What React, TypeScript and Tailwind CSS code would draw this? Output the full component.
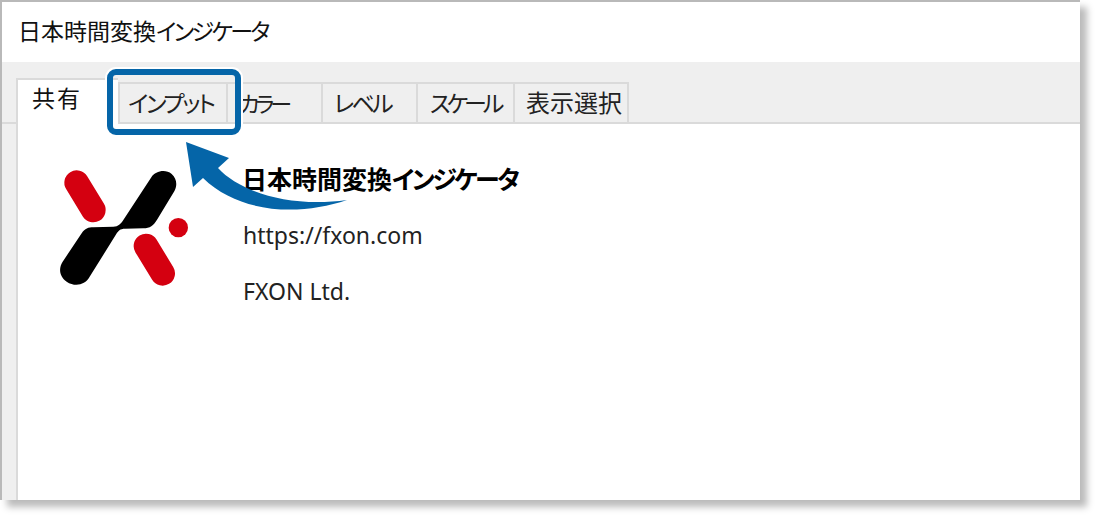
const jp = "font-['Noto_Sans_CJK_JP','Noto_Sans',sans-serif] [font-feature-settings:'palt']";

const tabs = [
  { label: "インプット", w: "w-[108px] pl-[8px]", c: "text-[23px] tracking-[-2.3px]" },
  { label: "カラー", w: "w-[95px] pl-[11px]", c: "text-[22px] tracking-[-4px]" },
  { label: "レベル", w: "w-[95px] pl-[11px]", c: "text-[23px] tracking-[-2.8px]" },
  { label: "スケール", w: "w-[97px] pl-[12px]", c: "text-[23px] tracking-[-4px]" },
  { label: "表示選択", w: "w-[116px] pl-[11px]", c: "text-[24px]" },
];

function Logo() {
  return (
    <svg width="150" height="135" viewBox="0 0 450 405" className="shrink-0">
      <path d="M80 68 L130 150" stroke="#d40010" strokeWidth="74" strokeLinecap="round" />
      <path d="M288 258 L338 340" stroke="#d40010" strokeWidth="74" strokeLinecap="round" />
      <circle cx="385" cy="203" r="29" fill="#d40010" />
      <path
        d="M305 50 C315 35 345 25 365 42 C382 58 382 78 372 95 L322 178 C310 198 300 205 280 205 L225 206 C210 206 205 212 197 225 L118 352 C105 375 75 382 50 365 C28 350 25 325 38 305 L95 220 C105 205 115 202 130 202 L190 200 C205 200 212 192 220 180 Z"
        fill="#000"
      />
    </svg>
  );
}

export default function App() {
  return (
    <div className={`relative h-[520px] w-[1100px] overflow-hidden bg-white ${jp}`}>
      <div className="flex h-[500px] w-[1080px] flex-col border-l-2 border-t-2 border-[#b9b9b9] bg-white text-[#111] shadow-[7px_7px_7px_rgba(0,0,0,0.27)]">
        <div className="flex h-[60px] items-center pb-[4px] pl-[16px] text-[23px]">
          日本時間変換<span className="tracking-[-2.6px]">インジケータ</span>
        </div>

        <div className="flex h-[62px] items-end border-b-2 border-[#dadada] bg-[#efefef] pl-[14px]">
          <div className="relative top-[2px] flex h-[46px] w-[102px] border-l-2 border-t-2 border-[#dadada] bg-white pl-[14px] text-[23px] leading-[34px] tracking-[2px]">
            共有
          </div>
          <div className="flex">
            {tabs.map((t) => (
              <div
                key={t.label}
                className={`flex h-[40px] items-center border-l-2 border-t-2 border-[#dadada] pb-[2px] text-[#222] last:border-r-2 ${t.w} ${t.c}`}
              >
                {t.label}
              </div>
            ))}
          </div>
        </div>

        <div className="flex flex-1 bg-[#efefef]">
          <div className="ml-[14px] flex flex-1 items-start border-l-2 border-[#dadada] bg-white pl-[32px] pt-[36px]">
            <Logo />
            <div className="ml-[43px] flex flex-col">
              <div className="-ml-[1px] mt-[-1px] h-[38px] text-[25px] font-bold leading-[38px] text-black">
                日本時間変換<span className="tracking-[-2.5px]">インジケータ</span>
              </div>
              <div className="mt-[24px] font-['Noto_Sans',sans-serif] text-[23px] leading-[28px] text-[#222]">https://fxon.com</div>
              <div className="mt-[28px] font-['Noto_Sans',sans-serif] text-[23px] leading-[28px] text-[#222]">FXON Ltd.</div>
            </div>
          </div>
        </div>
      </div>

      <div className="absolute left-[107px] top-[69px] h-[66px] w-[134px] rounded-[9px] border-[6px] border-[#0565a8] shadow-[0_0_0_2px_#fff]" />

      <svg className="absolute left-0 top-0" width="1100" height="520" viewBox="0 0 1100 520" fill="none">
        <path
          d="M186 142 L229 158 L218 168 C240 192 290 208 347 200 C300 216 240 214 203 178 L193 187 Z"
          fill="#0565a8"
        />
      </svg>
    </div>
  );
}
